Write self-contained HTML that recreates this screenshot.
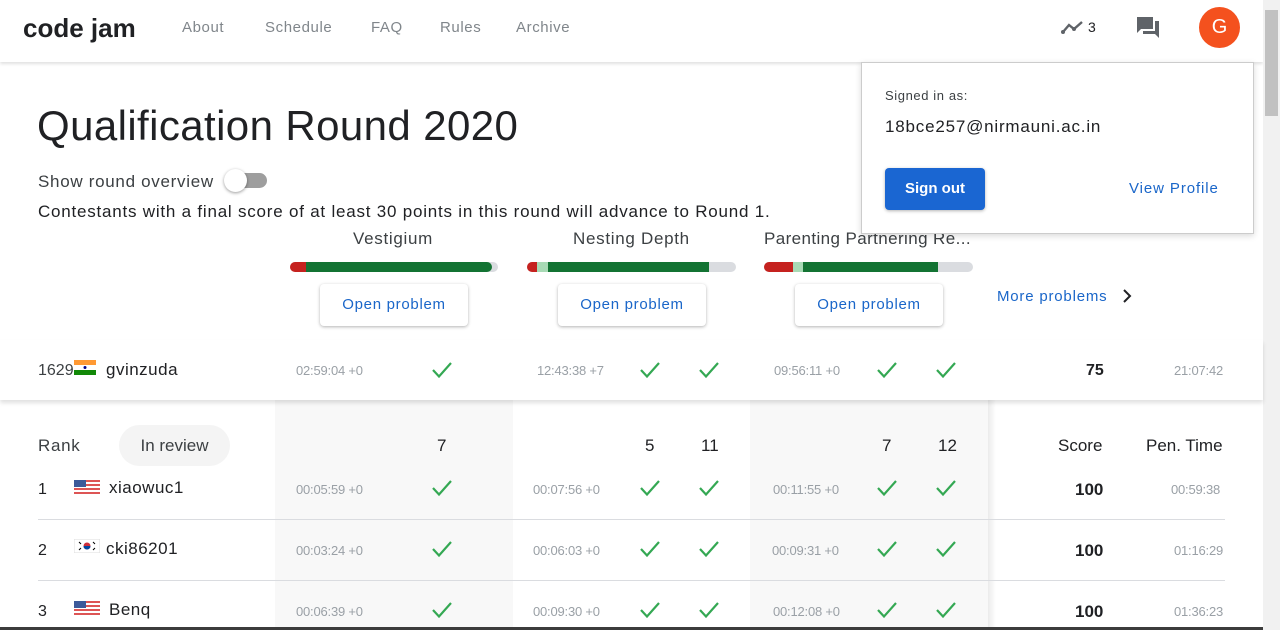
<!DOCTYPE html>
<html><head><meta charset="utf-8"><style>
*{margin:0;padding:0;box-sizing:border-box}
body{width:1280px;height:630px;overflow:hidden;background:#fff;font-family:"Liberation Sans",sans-serif;color:#202124;position:relative}
.a{position:absolute;white-space:nowrap}
.nav{font-size:15px;color:#80868b;top:19px;letter-spacing:.6px}
.bar{position:absolute;height:10px;top:262px;border-radius:5px;overflow:hidden;background:#dadce0}
.bar div{position:absolute;top:0;height:10px}
.btn{position:absolute;top:284px;width:148px;height:42px;background:#fff;border-radius:4px;box-shadow:0 1px 3px rgba(0,0,0,.3);color:#1a66c9;font-size:15px;text-align:center;line-height:42px;letter-spacing:.7px}
.t{font-size:13px;color:#9aa0a6;letter-spacing:-.2px}
.ck{position:absolute;width:22px;height:18px}
.g{position:absolute;background:#f8f8f8}
.hr{position:absolute;left:38px;width:1187px;height:1px;background:#dadce0}
.flag{position:absolute;width:26px;height:14px}
.h{font-size:17px;color:#3c4043;letter-spacing:.7px}
</style></head><body>
<svg width="0" height="0" style="position:absolute"><defs><symbol id="c" viewBox="0 0 22 18"><path d="M2 9 L8 15.5 L20 2" fill="none" stroke="#34a853" stroke-width="2.2"/></symbol>
<symbol id="us" viewBox="0 0 26 14"><rect width="26" height="14" fill="#fff"/><g fill="#d55"><rect y="0" width="26" height="2"/><rect y="4" width="26" height="2"/><rect y="8" width="26" height="2"/><rect y="12" width="26" height="2"/></g><rect width="12" height="7" fill="#3c5a9a"/></symbol></defs></svg>

<div class="a" style="left:0;top:0;width:1263px;height:62px;box-shadow:0 2px 3px rgba(0,0,0,.12);background:#fff"></div>
<div class="a" style="left:23px;top:13px;font-size:26px;font-weight:bold;letter-spacing:0;color:#202124">code jam</div>
<div class="a nav" style="left:182px">About</div>
<div class="a nav" style="left:265px">Schedule</div>
<div class="a nav" style="left:371px">FAQ</div>
<div class="a nav" style="left:440px">Rules</div>
<div class="a nav" style="left:516px">Archive</div>
<svg class="a" style="left:1061px;top:18px" width="24" height="18" viewBox="0 0 24 18"><path d="M2 14 L8 7 L13 11 L21 4" fill="none" stroke="#5f6368" stroke-width="2.4"/><circle cx="2" cy="14" r="2" fill="#5f6368"/><circle cx="13" cy="11" r="2" fill="#5f6368"/></svg>
<div class="a" style="left:1088px;top:19px;font-size:14px">3</div>
<svg class="a" style="left:1136px;top:16px" width="25" height="23" viewBox="0 0 25 23"><path d="M1 1h16v12H5l-4 4z" fill="#5f6368"/><path d="M19 5h4v17l-4-4H7v-3h12z" fill="#5f6368"/></svg>
<div class="a" style="left:1199px;top:7px;width:41px;height:41px;border-radius:50%;background:#f4511e;color:#fff;font-size:20px;text-align:center;line-height:41px">G</div>
<div class="a" style="left:1263px;top:0;width:17px;height:630px;background:#f1f1f1"></div>
<div class="a" style="left:1265px;top:10px;width:13px;height:106px;background:#c1c1c1"></div>
<div class="a" style="left:0;top:627px;width:1263px;height:3px;background:#3c3c3c"></div>

<div class="a" style="left:37px;top:102px;font-size:42px;color:#202124;letter-spacing:.4px">Qualification Round 2020</div>
<div class="a h" style="left:38px;top:172px">Show round overview</div>
<div class="a" style="left:230px;top:173px;width:37px;height:15px;border-radius:8px;background:#9e9e9e"></div>
<div class="a" style="left:224px;top:169px;width:23px;height:23px;border-radius:50%;background:#fff;box-shadow:0 1px 3px rgba(0,0,0,.4)"></div>
<div class="a" style="left:38px;top:202px;font-size:17px;letter-spacing:.78px">Contestants with a final score of at least 30 points in this round will advance to Round 1.</div>

<div class="a h" style="left:353px;top:229px">Vestigium</div>
<div class="a h" style="left:573px;top:229px">Nesting Depth</div>
<div class="a h" style="left:764px;top:229px;letter-spacing:.4px">Parenting Partnering Re...</div>
<div class="bar" style="left:290px;width:208px"><div style="left:0;width:16px;background:#c5221f"></div><div style="left:16px;width:186px;background:#137333;border-radius:0 5px 5px 0"></div></div>
<div class="bar" style="left:527px;width:209px"><div style="left:0;width:10px;background:#c5221f"></div><div style="left:10px;width:11px;background:#a8dab5"></div><div style="left:21px;width:161px;background:#137333"></div></div>
<div class="bar" style="left:764px;width:209px"><div style="left:0;width:29px;background:#c5221f"></div><div style="left:29px;width:10px;background:#a8dab5"></div><div style="left:39px;width:135px;background:#137333"></div></div>
<div class="btn" style="left:320px">Open problem</div>
<div class="btn" style="left:558px">Open problem</div>
<div class="btn" style="left:795px">Open problem</div>
<div class="a" style="left:997px;top:288px;font-size:15px;color:#1a66c9;letter-spacing:.8px">More problems</div>
<svg class="a" style="left:1122px;top:289px" width="10" height="14" viewBox="0 0 10 14"><path d="M2 1l6 6-6 6" fill="none" stroke="#202124" stroke-width="2"/></svg>

<div class="g" style="left:275px;top:400px;width:238px;height:227px"></div>
<div class="g" style="left:750px;top:400px;width:238px;height:227px"></div>
<div class="a" style="left:988px;top:400px;width:8px;height:227px;background:linear-gradient(90deg,rgba(0,0,0,.08),rgba(0,0,0,0))"></div>

<div class="a" style="left:0;top:340px;width:1263px;height:60px;background:#fff;box-shadow:0 3px 4px rgba(0,0,0,.12)"></div>
<div class="a" style="left:38px;top:362px;font-size:16px;color:#3c4043">1629</div>
<svg class="a" style="left:74px;top:360px" width="22" height="15" viewBox="0 0 22 15"><rect width="22" height="5" fill="#f93"/><rect y="5" width="22" height="5" fill="#fff"/><rect y="10" width="22" height="5" fill="#128807"/><circle cx="11" cy="7.5" r="1.5" fill="#008"/></svg>
<div class="a" style="left:106px;top:360px;font-size:17px;letter-spacing:.5px">gvinzuda</div>
<div class="a t" style="left:296px;top:363px">02:59:04 +0</div>
<div class="a t" style="left:537px;top:363px">12:43:38 +7</div>
<div class="a t" style="left:774px;top:363px">09:56:11 +0</div>
<svg class="ck" style="left:431px;top:361px"><use href="#c"/></svg>
<svg class="ck" style="left:639px;top:361px"><use href="#c"/></svg>
<svg class="ck" style="left:698px;top:361px"><use href="#c"/></svg>
<svg class="ck" style="left:876px;top:361px"><use href="#c"/></svg>
<svg class="ck" style="left:935px;top:361px"><use href="#c"/></svg>
<div class="a" style="left:1086px;top:362px;font-size:16px;font-weight:bold">75</div>
<div class="a t" style="left:1174px;top:363px">21:07:42</div>

<div class="a h" style="left:38px;top:436px">Rank</div>
<div class="a" style="left:119px;top:425px;width:111px;height:41px;border-radius:21px;background:#f4f4f4;font-size:17px;color:#3c4043;text-align:center;line-height:41px">In review</div>
<div class="a" style="left:437px;top:436px;font-size:17px">7</div>
<div class="a" style="left:645px;top:436px;font-size:17px">5</div>
<div class="a" style="left:701px;top:436px;font-size:17px">11</div>
<div class="a" style="left:882px;top:436px;font-size:17px">7</div>
<div class="a" style="left:938px;top:436px;font-size:17px">12</div>
<div class="a" style="left:1058px;top:436px;font-size:17px">Score</div>
<div class="a" style="left:1146px;top:436px;font-size:17px">Pen. Time</div>

<div class="hr" style="top:519px"></div>
<div class="hr" style="top:580px"></div>

<div class="a" style="left:38px;top:481px;font-size:16px">1</div>
<svg class="flag" style="left:74px;top:480px"><use href="#us"/></svg>
<div class="a" style="left:109px;top:478px;font-size:17px;letter-spacing:.5px">xiaowuc1</div>
<div class="a t" style="left:296px;top:482px">00:05:59 +0</div>
<div class="a t" style="left:533px;top:482px">00:07:56 +0</div>
<div class="a t" style="left:773px;top:482px">00:11:55 +0</div>
<div class="a" style="left:1075px;top:480px;font-size:17px;font-weight:bold">100</div>
<div class="a t" style="left:1171px;top:482px">00:59:38</div>

<div class="a" style="left:38px;top:542px;font-size:16px">2</div>
<svg class="flag" style="left:74px;top:539px" viewBox="0 0 26 14"><rect width="26" height="14" fill="#fff" stroke="#ddd"/><circle cx="13" cy="7" r="3.5" fill="#cd2e3a"/><path d="M9.5 7a3.5 3.5 0 0 0 7 0z" fill="#0047a0"/><g stroke="#000"><path d="M5 3l2 2M19 3l2 2M5 11l2-2M19 11l2-2"/></g></svg>
<div class="a" style="left:106px;top:539px;font-size:17px;letter-spacing:.5px">cki86201</div>
<div class="a t" style="left:296px;top:543px">00:03:24 +0</div>
<div class="a t" style="left:533px;top:543px">00:06:03 +0</div>
<div class="a t" style="left:772px;top:543px">00:09:31 +0</div>
<div class="a" style="left:1075px;top:541px;font-size:17px;font-weight:bold">100</div>
<div class="a t" style="left:1174px;top:543px">01:16:29</div>

<div class="a" style="left:38px;top:603px;font-size:16px">3</div>
<svg class="flag" style="left:74px;top:601px"><use href="#us"/></svg>
<div class="a" style="left:109px;top:600px;font-size:17px;letter-spacing:.5px">Benq</div>
<div class="a t" style="left:296px;top:604px">00:06:39 +0</div>
<div class="a t" style="left:533px;top:604px">00:09:30 +0</div>
<div class="a t" style="left:773px;top:604px">00:12:08 +0</div>
<div class="a" style="left:1075px;top:602px;font-size:17px;font-weight:bold">100</div>
<div class="a t" style="left:1174px;top:604px">01:36:23</div>

<svg class="ck" style="left:431px;top:479px"><use href="#c"/></svg><svg class="ck" style="left:639px;top:479px"><use href="#c"/></svg><svg class="ck" style="left:698px;top:479px"><use href="#c"/></svg><svg class="ck" style="left:876px;top:479px"><use href="#c"/></svg><svg class="ck" style="left:935px;top:479px"><use href="#c"/></svg>
<svg class="ck" style="left:431px;top:540px"><use href="#c"/></svg><svg class="ck" style="left:639px;top:540px"><use href="#c"/></svg><svg class="ck" style="left:698px;top:540px"><use href="#c"/></svg><svg class="ck" style="left:876px;top:540px"><use href="#c"/></svg><svg class="ck" style="left:935px;top:540px"><use href="#c"/></svg>
<svg class="ck" style="left:431px;top:601px"><use href="#c"/></svg><svg class="ck" style="left:639px;top:601px"><use href="#c"/></svg><svg class="ck" style="left:698px;top:601px"><use href="#c"/></svg><svg class="ck" style="left:876px;top:601px"><use href="#c"/></svg><svg class="ck" style="left:935px;top:601px"><use href="#c"/></svg>

<div class="a" style="left:861px;top:62px;width:393px;height:172px;background:#fff;border:1px solid #ccc;box-shadow:0 2px 6px rgba(0,0,0,.15)"></div>
<div class="a" style="left:885px;top:88px;font-size:13px;color:#3c4043;letter-spacing:.6px">Signed in as:</div>
<div class="a" style="left:885px;top:117px;font-size:17px;color:#202124;letter-spacing:.8px">18bce257@nirmauni.ac.in</div>
<div class="a" style="left:885px;top:168px;width:100px;height:42px;border-radius:4px;background:#1a66d2;color:#fff;font-size:15px;font-weight:bold;text-align:center;line-height:42px;box-shadow:0 1px 3px rgba(0,0,0,.3)">Sign out</div>
<div class="a" style="left:1129px;top:180px;font-size:15px;color:#1a66c9;letter-spacing:.9px">View Profile</div>
</body></html>
